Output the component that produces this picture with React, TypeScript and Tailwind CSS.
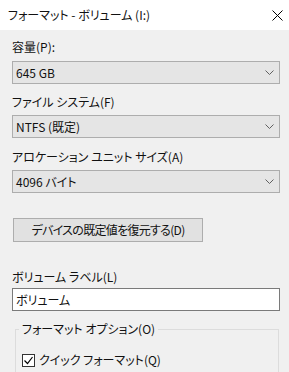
import React from 'react';

const font = { fontFamily: '"Noto Sans CJK JP", "Noto Sans", sans-serif' };

const Chevron = () => (
  <svg width="9" height="5" viewBox="0 0 9 5" className="shrink-0">
    <path d="M0.5 0.5 L4.5 4.5 L8.5 0.5" fill="none" stroke="#606060" strokeWidth="1" />
  </svg>
);

const Combo = ({ value, className = '' }: { value: string; className?: string }) => (
  <div
    className={`flex h-[23px] items-center justify-between border border-[#adadad] bg-[#e5e5e5] pl-[3px] pr-[5px] ${className}`}
  >
    <span className="leading-[16px]">{value}</span>
    <Chevron />
  </div>
);

const Label = ({ text, className = '' }: { text: string; className?: string }) => (
  <div className={`h-[16px] leading-[16px] ${className}`}>{text}</div>
);

export default function App() {
  return (
    <div
      className="h-[372px] w-[289px] overflow-hidden bg-[#f0f0f0] text-[12px] text-[#111] [font-feature-settings:'palt']"
      style={font}
    >
      {/* title bar */}
      <div className="flex h-[30px] items-center justify-between bg-white pl-[8px] pr-[6px]">
        <span className="leading-[16px]">フォーマット - ボリューム (I:)</span>
        <svg width="11" height="11" viewBox="0 0 11 11">
          <path d="M0.5 0.5 L10.5 10.5 M10.5 0.5 L0.5 10.5" stroke="#000" strokeWidth="1" />
        </svg>
      </div>

      <div className="flex flex-col pl-[12px] pr-[9px]">
        <Label text="容量(P):" className="mt-[9px]" />
        <Combo value="645 GB" className="mt-[6px]" />

        <Label text="ファイル システム(F)" className="mt-[10px]" />
        <Combo value="NTFS (既定)" className="mt-[5px]" />

        <Label text="アロケーション ユニット サイズ(A)" className="mt-[11px]" />
        <Combo value="4096 バイト" className="mt-[5px]" />

        <button className="ml-[1px] mt-[25px] flex h-[24px] w-[190px] items-center justify-center border border-[#adadad] bg-[#e1e1e1] leading-[16px] tracking-[-0.7px]">
          デバイスの既定値を復元する(D)
        </button>

        <Label text="ボリューム ラベル(L)" className="mt-[27px]" />
        <div className="mt-[3px] flex h-[23px] items-center border border-[#7a7a7a] bg-white pl-[3px]">
          <span className="leading-[16px]">ボリューム</span>
        </div>

        {/* format options group */}
        <div className="relative ml-[3px] mr-[1px] mt-[18px] h-[80px] border border-[#dcdcdc]">
          <span className="absolute -top-[9px] left-[3px] bg-[#f0f0f0] px-[3px] leading-[16px]">
            フォーマット オプション(O)
          </span>
          <div className="ml-[6px] mt-[22px] flex items-center gap-[4px]">
            <span className="flex h-[13px] w-[13px] items-center justify-center border border-[#333] bg-white">
              <svg width="11" height="11" viewBox="0 0 11 11">
                <path d="M1.5 5.5 L4.5 8.5 L9.5 2" fill="none" stroke="#000" strokeWidth="1.2" />
              </svg>
            </span>
            <span className="leading-[16px]">クイック フォーマット(Q)</span>
          </div>
        </div>
      </div>
    </div>
  );
}
